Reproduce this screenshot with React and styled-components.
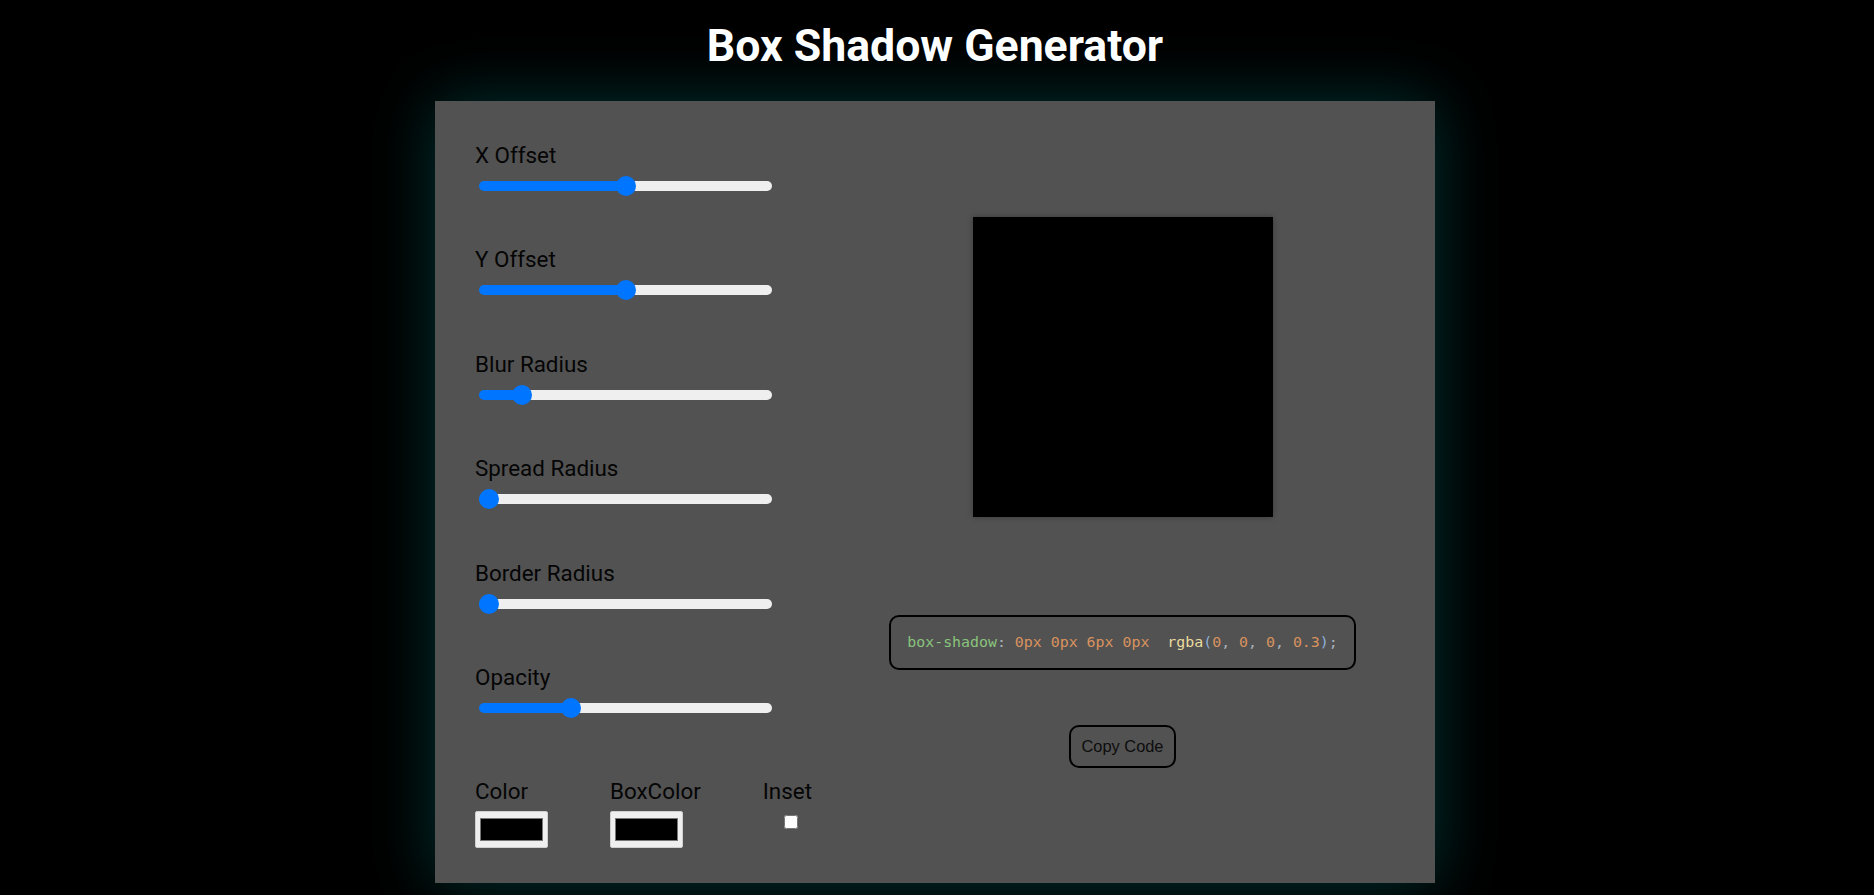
import React, { useState } from "react";
import styled, { createGlobalStyle } from "styled-components";

const GlobalStyle = createGlobalStyle`
  html, body {
    margin: 0;
    padding: 0;
    background: #000;
  }
  body {
    font-family: Roboto, "Noto Sans", sans-serif;
  }
`;

const Page = styled.main`
  display: flex;
  flex-direction: column;
  align-items: center;
  padding: 0 4px 0 0;
  min-height: 100vh;
  box-sizing: border-box;
`;

const Title = styled.h1`
  margin: 20px 0 29px;
  font-family: Roboto, sans-serif;
  font-weight: 700;
  font-size: 44.6px;
  line-height: normal;
  color: #fff;
`;

const Panel = styled.section`
  width: 1000px;
  box-sizing: border-box;
  display: flex;
  padding: 40.5px 40px 35px;
  background: #525252;
  box-shadow: 0 0 60px rgba(0, 255, 255, 0.2);
`;

const Controls = styled.div`
  width: 375px;
  flex: none;
  display: flex;
  flex-direction: column;
`;

const SliderList = styled.div`
  display: flex;
  flex-direction: column;
  gap: 50.5px;
`;

const Field = styled.label`
  display: flex;
  flex-direction: column;
`;

const Label = styled.span`
  font-family: Roboto, sans-serif;
  font-size: 22.4px;
  line-height: normal;
  color: #050505;
`;

const Range = styled.input.attrs({ type: "range" })`
  -webkit-appearance: none;
  appearance: none;
  display: block;
  width: 293px;
  height: 20px;
  margin: 8px 0 0 4px;
  padding: 0;
  background: transparent;
  cursor: pointer;

  &::-webkit-slider-runnable-track {
    height: 10px;
    border-radius: 5px;
    background: linear-gradient(
      to right,
      #0075ff var(--fill),
      #efefef var(--fill)
    );
  }

  &::-webkit-slider-thumb {
    -webkit-appearance: none;
    appearance: none;
    width: 20px;
    height: 20px;
    margin-top: -5px;
    border: none;
    border-radius: 50%;
    background: #0075ff;
  }
`;

const OptionRow = styled.div`
  display: flex;
  gap: 62px;
  margin-top: 60px;
`;

const Option = styled.label`
  display: flex;
  flex-direction: column;
  align-items: flex-start;
`;

const ColorInput = styled.input.attrs({ type: "color" })`
  width: 73px;
  height: 37px;
  margin: 7px 0 0;
  padding: 1px 2px;
  box-sizing: border-box;
  background: #efefef;
  border: 1px solid #cfcfcf;
  border-radius: 2px;
  cursor: pointer;

  &::-webkit-color-swatch-wrapper {
    padding: 5px 2px;
  }
  &::-webkit-color-swatch {
    border: 1px solid #777;
    border-radius: 0;
  }
`;

const Checkbox = styled.input.attrs({ type: "checkbox" })`
  width: 14px;
  height: 14px;
  margin: 11px 0 0 21px;
`;

const Preview = styled.div`
  flex: 1;
  display: flex;
  flex-direction: column;
  align-items: center;
  padding-top: 75px;
`;

const ShadowBox = styled.div`
  width: 300px;
  height: 300px;
  background: #000;
`;

const CodeBlock = styled.pre`
  margin: 98px 0 0;
  padding: 16px 16px;
  border: 2px solid #000;
  border-radius: 10px;
  font-family: "DejaVu Sans Mono", "Liberation Mono", monospace;
  font-size: 14.9px;
  line-height: 19px;
  white-space: pre;
  color: #a9b2bd;
`;

const Token = styled.span`
  color: ${(p) =>
    ({
      property: "#89c47c",
      number: "#d9925e",
      func: "#eadb9f",
      paren: "#8fb0d8",
      punct: "#aab3bd",
    }[p.$kind])};
`;

const CopyButton = styled.button`
  margin-top: 55px;
  padding: 10px 10px;
  background: transparent;
  border: 2px solid #000;
  border-radius: 10px;
  font-family: "Liberation Sans", Arial, sans-serif;
  font-size: 16.4px;
  line-height: normal;
  color: #0d0d0d;
  cursor: pointer;
`;

const sliders = [
  { key: "x", label: "X Offset", min: -50, max: 50, step: 1 },
  { key: "y", label: "Y Offset", min: -50, max: 50, step: 1 },
  { key: "blur", label: "Blur Radius", min: 0, max: 50, step: 1 },
  { key: "spread", label: "Spread Radius", min: 0, max: 50, step: 1 },
  { key: "radius", label: "Border Radius", min: 0, max: 50, step: 1 },
  { key: "opacity", label: "Opacity", min: 0, max: 1, step: 0.1 },
];

const fillFor = (v, min, max) => {
  const f = (v - min) / (max - min);
  return `${((10 + f * 273) / 293) * 100}%`;
};

const hexToRgb = (hex) => {
  const n = parseInt(hex.slice(1), 16);
  return [(n >> 16) & 255, (n >> 8) & 255, n & 255];
};

export default function App() {
  const [vals, setVals] = useState({
    x: 0,
    y: 0,
    blur: 6,
    spread: 0,
    radius: 0,
    opacity: 0.3,
  });
  const [color, setColor] = useState("#000000");
  const [boxColor, setBoxColor] = useState("#000000");
  const [inset, setInset] = useState(false);

  const [r, g, b] = hexToRgb(color);
  const shadow = `${inset ? "inset " : ""}${vals.x}px ${vals.y}px ${vals.blur}px ${vals.spread}px rgba(${r}, ${g}, ${b}, ${vals.opacity})`;

  const copy = () => {
    try {
      navigator.clipboard?.writeText(`box-shadow: ${shadow};`);
    } catch (e) {
      /* ignore */
    }
  };

  return (
    <>
      <GlobalStyle />
      <Page>
        <Title>Box Shadow Generator</Title>
        <Panel>
          <Controls>
            <SliderList>
              {sliders.map((s) => (
                <Field key={s.key}>
                  <Label>{s.label}</Label>
                  <Range
                    min={s.min}
                    max={s.max}
                    step={s.step}
                    value={vals[s.key]}
                    style={{ "--fill": fillFor(vals[s.key], s.min, s.max) }}
                    onChange={(e) =>
                      setVals({ ...vals, [s.key]: Number(e.target.value) })
                    }
                  />
                </Field>
              ))}
            </SliderList>
            <OptionRow>
              <Option>
                <Label>Color</Label>
                <ColorInput
                  value={color}
                  onChange={(e) => setColor(e.target.value)}
                />
              </Option>
              <Option>
                <Label>BoxColor</Label>
                <ColorInput
                  value={boxColor}
                  onChange={(e) => setBoxColor(e.target.value)}
                />
              </Option>
              <Option>
                <Label>Inset</Label>
                <Checkbox
                  checked={inset}
                  onChange={(e) => setInset(e.target.checked)}
                />
              </Option>
            </OptionRow>
          </Controls>
          <Preview>
            <ShadowBox
              style={{
                boxShadow: shadow,
                borderRadius: `${vals.radius}px`,
                background: boxColor,
              }}
            />
            <CodeBlock>
              <Token $kind="property">box-shadow</Token>
              <Token $kind="punct">: </Token>
              {inset && <Token $kind="func">inset </Token>}
              <Token $kind="number">{vals.x}px</Token>{" "}
              <Token $kind="number">{vals.y}px</Token>{" "}
              <Token $kind="number">{vals.blur}px</Token>{" "}
              <Token $kind="number">{vals.spread}px</Token>
              {"  "}
              <Token $kind="func">rgba</Token>
              <Token $kind="paren">(</Token>
              <Token $kind="number">{r}</Token>
              <Token $kind="punct">, </Token>
              <Token $kind="number">{g}</Token>
              <Token $kind="punct">, </Token>
              <Token $kind="number">{b}</Token>
              <Token $kind="punct">, </Token>
              <Token $kind="number">{vals.opacity}</Token>
              <Token $kind="paren">)</Token>
              <Token $kind="punct">;</Token>
            </CodeBlock>
            <CopyButton onClick={copy}>Copy Code</CopyButton>
          </Preview>
        </Panel>
      </Page>
    </>
  );
}
